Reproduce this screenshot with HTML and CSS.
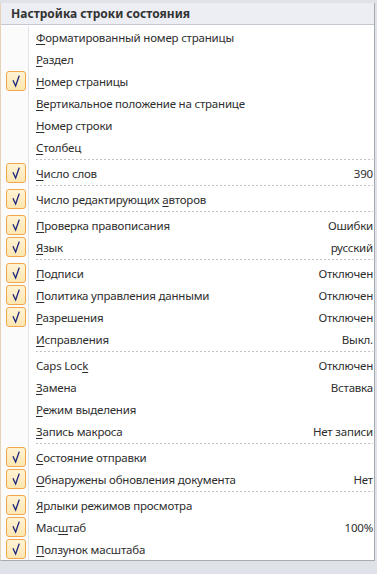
FILE: index.html
```html
<!DOCTYPE html>
<html lang="ru">
<head>
    <meta charset="UTF-8">
    <meta name="viewport" content="width=device-width, initial-scale=1.0">
    <title>Настройка строки состояния</title>
    <link rel="stylesheet" href="styles.css">
</head>
<body>
    <div class="menu">
        <div class="menu-title">Настройка строки состояния</div>
        <div class="menu-list">
            <div class="item"><span class="check"></span><span class="label"><u>Ф</u>орматированный номер страницы</span></div>
            <div class="item"><span class="check"></span><span class="label"><u>Р</u>аздел</span></div>
            <div class="item on"><span class="check"><svg viewBox="0 0 20 20"><path d="M6.6 9.2 L9.6 15.6 L13.6 4"/></svg></span><span class="label"><u>Н</u>омер страницы</span></div>
            <div class="item"><span class="check"></span><span class="label"><u>В</u>ертикальное положение на странице</span></div>
            <div class="item"><span class="check"></span><span class="label"><u>Н</u>омер строки</span></div>
            <div class="item"><span class="check"></span><span class="label"><u>С</u>толбец</span></div>
            <div class="sep"></div>
            <div class="item on"><span class="check"><svg viewBox="0 0 20 20"><path d="M6.6 9.2 L9.6 15.6 L13.6 4"/></svg></span><span class="label"><u>Ч</u>исло слов</span><span class="value">390</span></div>
            <div class="sep"></div>
            <div class="item on"><span class="check"><svg viewBox="0 0 20 20"><path d="M6.6 9.2 L9.6 15.6 L13.6 4"/></svg></span><span class="label">Число редактирующих <u>а</u>второв</span></div>
            <div class="sep"></div>
            <div class="item on"><span class="check"><svg viewBox="0 0 20 20"><path d="M6.6 9.2 L9.6 15.6 L13.6 4"/></svg></span><span class="label"><u>П</u>роверка правописания</span><span class="value">Ошибки</span></div>
            <div class="item on"><span class="check"><svg viewBox="0 0 20 20"><path d="M6.6 9.2 L9.6 15.6 L13.6 4"/></svg></span><span class="label"><u>Я</u>зык</span><span class="value">русский</span></div>
            <div class="sep"></div>
            <div class="item on"><span class="check"><svg viewBox="0 0 20 20"><path d="M6.6 9.2 L9.6 15.6 L13.6 4"/></svg></span><span class="label"><u>П</u>одписи</span><span class="value">Отключен</span></div>
            <div class="item on"><span class="check"><svg viewBox="0 0 20 20"><path d="M6.6 9.2 L9.6 15.6 L13.6 4"/></svg></span><span class="label"><u>П</u>олитика управления данными</span><span class="value">Отключен</span></div>
            <div class="item on"><span class="check"><svg viewBox="0 0 20 20"><path d="M6.6 9.2 L9.6 15.6 L13.6 4"/></svg></span><span class="label"><u>Р</u>азрешения</span><span class="value">Отключен</span></div>
            <div class="item"><span class="check"></span><span class="label"><u>И</u>справления</span><span class="value">Выкл.</span></div>
            <div class="sep"></div>
            <div class="item"><span class="check"></span><span class="label">Caps Loc<u>k</u></span><span class="value">Отключен</span></div>
            <div class="item"><span class="check"></span><span class="label"><u>З</u>амена</span><span class="value">Вставка</span></div>
            <div class="item"><span class="check"></span><span class="label"><u>Р</u>ежим выделения</span></div>
            <div class="item"><span class="check"></span><span class="label"><u>З</u>апись макроса</span><span class="value">Нет записи</span></div>
            <div class="sep"></div>
            <div class="item on"><span class="check"><svg viewBox="0 0 20 20"><path d="M6.6 9.2 L9.6 15.6 L13.6 4"/></svg></span><span class="label"><u>С</u>остояние отправки</span></div>
            <div class="item on"><span class="check"><svg viewBox="0 0 20 20"><path d="M6.6 9.2 L9.6 15.6 L13.6 4"/></svg></span><span class="label"><u>О</u>бнаружены обновления документа</span><span class="value">Нет</span></div>
            <div class="sep"></div>
            <div class="item on"><span class="check"><svg viewBox="0 0 20 20"><path d="M6.6 9.2 L9.6 15.6 L13.6 4"/></svg></span><span class="label"><u>Я</u>рлыки режимов просмотра</span></div>
            <div class="item on"><span class="check"><svg viewBox="0 0 20 20"><path d="M6.6 9.2 L9.6 15.6 L13.6 4"/></svg></span><span class="label">Мас<u>ш</u>таб</span><span class="value">100%</span></div>
            <div class="item on"><span class="check"><svg viewBox="0 0 20 20"><path d="M6.6 9.2 L9.6 15.6 L13.6 4"/></svg></span><span class="label"><u>П</u>олзунок масштаба</span></div>
        </div>
    </div>
</body>
</html>
```

FILE: styles.css
```css
body {
    margin: 0;
    padding-top: 3px;
    background: #dfe2e9;
    font-family: "Noto Sans", "Open Sans", sans-serif;
    font-size: 11.5px;
    letter-spacing: -0.2px;
    color: #2e2e2e;
}
.menu {
    width: 373px;
    background: white;
    border-left: 1px solid #e4d3b8;
    border-right: 1px solid #a7abb0;
    border-bottom: 1px solid #a7abb0;
}
.menu-title {
    height: 21px;
    line-height: 21px;
    padding-left: 10px;
    font-size: 12px;
    letter-spacing: 0;
    font-weight: bold;
    color: #333;
    background: #eceef3;
    border-bottom: 1px solid #c5c8ce;
}
.menu-list {
    margin-top: 1px;
    background: linear-gradient(to right, #fbfbfb 0 27px, #e2e3e4 27px 28px, #fff 28px);
}
.item {
    height: 22px;
    display: flex;
    align-items: center;
    white-space: nowrap;
}
.check {
    width: 20px;
    height: 20px;
    margin-left: 5px;
    margin-right: 10px;
    box-sizing: border-box;
    border-radius: 3px;
    flex: none;
}
.item.on .check {
    border: 1px solid #f2a64a;
    background: linear-gradient(#fef3d4, #fde6b0);
}
.check svg {
    display: block;
    width: 18px;
    height: 18px;
}
.check path {
    fill: none;
    stroke: #1c2780;
    stroke-width: 1.5;
}
.label u {
    text-decoration-thickness: 1px;
    text-underline-offset: 2px;
}
.value {
    margin-left: auto;
    padding-right: 1px;
}
.sep {
    height: 4px;
    margin-left: 35px;
    margin-right: 1px;
    background: repeating-linear-gradient(to right, #c3c3c3 0 2px, transparent 2px 4px) 0 1px / 100% 1px no-repeat;
}
```
